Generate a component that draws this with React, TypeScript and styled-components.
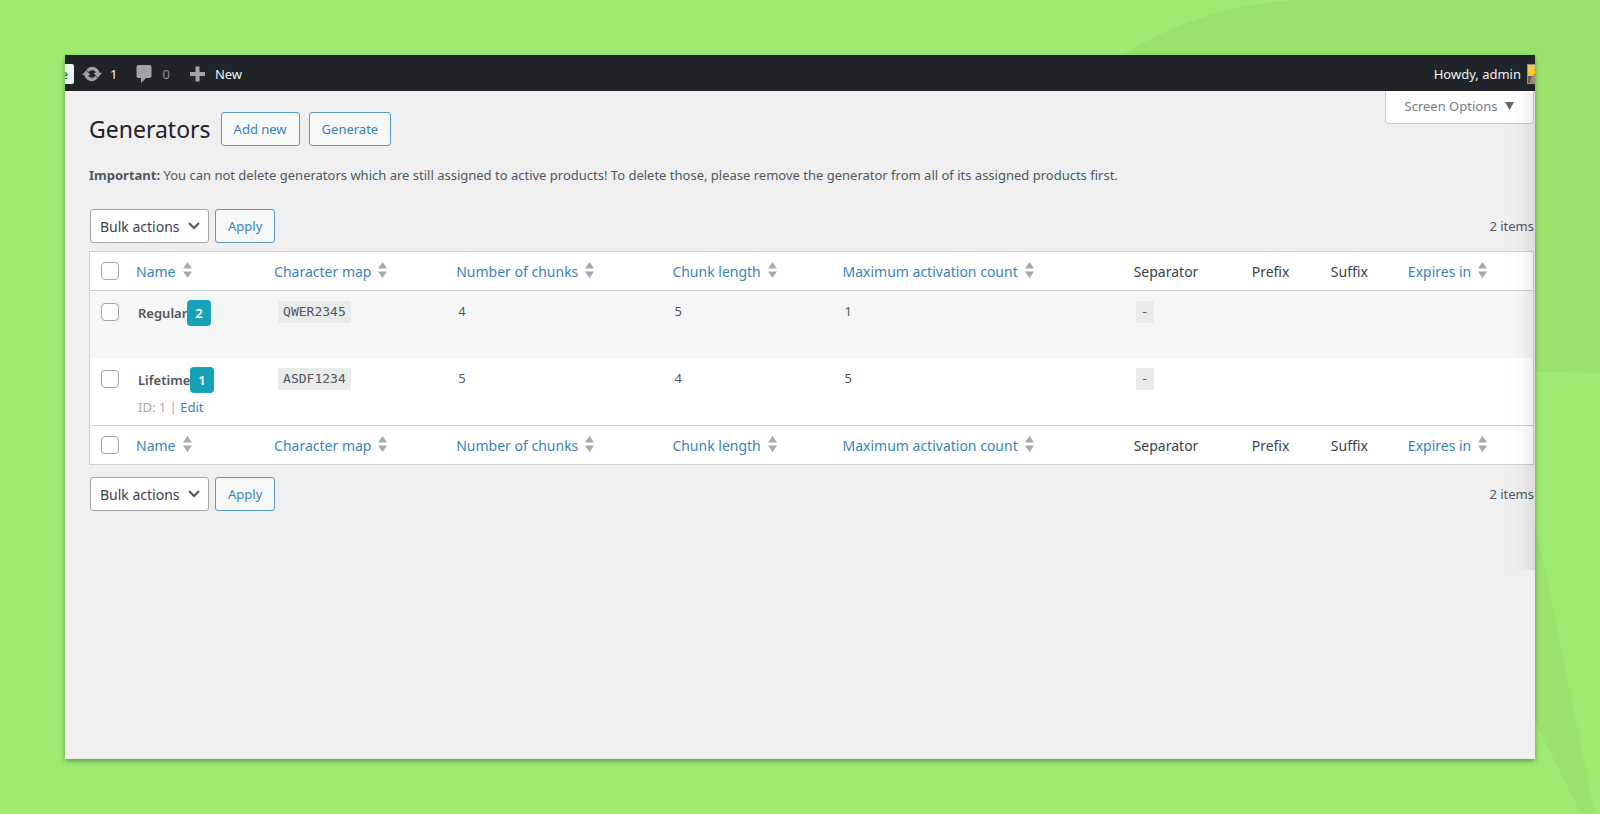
import React from "react";
import styled, { createGlobalStyle } from "styled-components";

const Global = createGlobalStyle`
  *, *::before, *::after { box-sizing: border-box; }
  body {
    margin: 0;
    background: #9fea70;
    color: #50575e;
    font-family: "Noto Sans", "Open Sans", sans-serif;
    font-size: 14px;
    line-height: 20px;
  }
  button, select, input { font-family: inherit; margin: 0; }
  a { color: #3c82bd; text-decoration: none; }
`;

const Stage = styled.div`
  position: relative;
  display: flex;
  min-height: 100vh;
  padding: 55px 65px;
`;

const Backdrop = styled.svg`
  position: absolute;
  inset: 0;
  width: 100%;
  height: 100%;
`;

const FrameShadow = styled.div`
  position: relative;
  display: flex;
  flex: 1;
  min-width: 0;
  box-shadow: 0 2px 5px rgba(0, 0, 0, 0.35);
`;

const Frame = styled.div`
  position: relative;
  flex: 1;
  min-width: 0;
  overflow: hidden;
  background: #efefef;
`;

const EdgeShade = styled.div`
  position: absolute;
  top: 36px;
  right: 0;
  width: 26px;
  height: 479px;
  background: linear-gradient(to right, rgba(0, 0, 0, 0), rgba(0, 0, 0, 0.02) 50%, rgba(0, 0, 0, 0.08));
  pointer-events: none;
`;

const AdminBar = styled.header`
  display: flex;
  align-items: center;
  height: 36px;
  padding-top: 1px;
  background: #1f2428;
  color: #f0f0f1;
  overflow: hidden;
`;

const SiteChip = styled.a`
  display: flex;
  justify-content: flex-end;
  align-items: center;
  width: 9px;
  height: 20px;
  padding-right: 6px;
  margin-right: 8px;
  border-radius: 0 2px 2px 0;
  background: #e9f5ec;
  color: #2f7d6b;
  font-size: 13px;
  font-weight: 600;
  overflow: hidden;
`;

const BarLink = styled.a<{ $dim?: boolean }>`
  display: flex;
  align-items: center;
  gap: 8px;
  margin-right: 17px;
  color: ${(p) => (p.$dim ? "#8c9297" : "#f0f0f1")};
  font-size: 13px;
`;

const BarIcon = styled.svg`
  display: block;
  width: 20px;
  height: 20px;
  overflow: visible;
  fill: #a0a5aa;
`;

const Account = styled.a`
  display: flex;
  align-items: center;
  gap: 6px;
  margin-left: auto;
  color: #f0f0f1;
  font-size: 13px;
`;

const Avatar = styled.svg`
  display: block;
  width: 8px;
  height: 20px;
`;

const Body = styled.main`
  position: relative;
  padding: 21px 1px 24px 24px;
`;

const ScreenOptions = styled.button`
  position: absolute;
  top: 0;
  right: 1px;
  display: flex;
  align-items: center;
  justify-content: center;
  gap: 8px;
  width: 149px;
  height: 33px;
  padding: 0 0 2px;
  border: 1px solid #cfd0d2;
  border-top: 0;
  border-radius: 0 0 4px 4px;
  background: #fff;
  color: #787c82;
  font-size: 13px;
`;

const Caret = styled.svg`
  width: 9px;
  height: 8px;
  fill: #646970;
`;

const TitleRow = styled.div`
  display: flex;
  align-items: center;
  gap: 9px;
`;

const Title = styled.h1`
  margin: 0 1px 0 0;
  color: #1d2327;
  font-size: 23px;
  font-weight: 400;
  line-height: 34px;
`;

const Button = styled.button`
  height: 34px;
  padding: 0 12px;
  border: 1px solid #5a98cb;
  border-radius: 3px;
  background: #f6f7f7;
  color: #3c82bd;
  font-size: 13px;
  line-height: 20px;
`;

const Notice = styled.p`
  margin: 19px 0 0;
  font-size: 13px;
  line-height: 20px;
`;

const TableNav = styled.div<{ $bottom?: boolean }>`
  display: flex;
  align-items: center;
  gap: 6px;
  margin-left: 1px;
  margin-top: ${(p) => (p.$bottom ? 12 : 24)}px;
  margin-bottom: ${(p) => (p.$bottom ? 0 : 8)}px;
`;

const SelectBox = styled.div`
  position: relative;
`;

const Select = styled.select`
  display: block;
  appearance: none;
  width: 119px;
  height: 34px;
  padding: 1px 0 0 9px;
  border: 1px solid #a3a6ab;
  border-radius: 3px;
  background: #fff;
  color: #3c434a;
  font-size: 14px;
`;

const Chevron = styled.svg`
  position: absolute;
  top: 13px;
  right: 9px;
  width: 12px;
  height: 8px;
  fill: none;
  stroke: #50575e;
  stroke-width: 2;
  pointer-events: none;
`;

const Count = styled.span`
  margin-left: auto;
  font-size: 13px;
`;

const Table = styled.table`
  width: 100%;
  table-layout: fixed;
  border-collapse: separate;
  border-spacing: 0;
  border: 1px solid #cfd0d2;
  background: #fff;
`;

const HeadCell = styled.th<{ $foot?: boolean }>`
  height: 39px;
  padding: 1px 0 0 9px;
  border: 0 solid #cfd0d2;
  border-width: ${(p) => (p.$foot ? "1px 0 0" : "0 0 1px")};
  color: #3c434a;
  font-size: 14px;
  font-weight: 400;
  text-align: left;
  white-space: nowrap;
`;

const SortLink = styled.a`
  display: inline-flex;
  align-items: center;
  gap: 7px;
`;

const SortMark = styled.svg`
  width: 9px;
  height: 16px;
  margin-bottom: 3px;
  fill: #a7aaad;
`;

const Row = styled.tr<{ $striped?: boolean }>`
  background: ${(p) => (p.$striped ? "#f5f7f7" : "#fff")};
`;

const Cell = styled.td`
  height: 67px;
  padding: 9px 0 0 11px;
  vertical-align: top;
  font-size: 13px;
  line-height: 22px;
`;

const Check = styled.input`
  display: block;
  appearance: none;
  width: 18px;
  height: 18px;
  margin-top: 3px;
  border: 1px solid #a3a6ab;
  border-radius: 4px;
  background: #fff;
`;

const CheckHead = styled(HeadCell)`
  padding: 0 0 0 11px;

  ${Check} {
    margin-top: 0;
  }
`;

const NameLine = styled.div`
  display: flex;
  align-items: center;
  font-weight: 600;
  line-height: 26px;
`;

const Badge = styled.span`
  padding: 0 8px;
  border-radius: 4px;
  background: #17a2b8;
  color: #fff;
  font-size: 13px;
`;

const RowActions = styled.div`
  color: #a7aaad;
  line-height: 20px;
  padding-top: 4px;
`;

const Code = styled.code`
  display: inline-block;
  padding: 0 5px;
  margin-left: 2px;
  background: #e9eaea;
  font-family: "DejaVu Sans Mono", monospace;
  font-size: 13px;
  line-height: 22px;
`;

const SepCode = styled(Code)`
  margin-left: 0;
`;

const columns = [
  { label: "Name", width: 138, sortable: true },
  { label: "Character map", width: 182, sortable: true },
  { label: "Number of chunks", width: 216, sortable: true },
  { label: "Chunk length", width: 170, sortable: true },
  { label: "Maximum activation count", width: 291, sortable: true },
  { label: "Separator", width: 118, sortable: false },
  { label: "Prefix", width: 79, sortable: false },
  { label: "Suffix", width: 77, sortable: false },
  { label: "Expires in", width: 134, sortable: true },
];

const rows = [
  { name: "Regular", badge: 2, map: "QWER2345", chunks: 4, length: 5, max: 1, id: 0 },
  { name: "Lifetime", badge: 1, map: "ASDF1234", chunks: 5, length: 4, max: 5, id: 1 },
];

function HeadRow({ foot }: { foot?: boolean }) {
  return (
    <tr>
      <CheckHead $foot={foot}>
        <Check type="checkbox" aria-label="Select all" />
      </CheckHead>
      {columns.map((c) => (
        <HeadCell key={c.label} $foot={foot} scope="col">
          {c.sortable ? (
            <SortLink href="#">
              {c.label}
              <SortMark viewBox="0 0 9 16">
                <path d="M4.500 0L9 6.500H0zM4.500 16L9 9.500H0z" />
              </SortMark>
            </SortLink>
          ) : (
            c.label
          )}
        </HeadCell>
      ))}
    </tr>
  );
}

function BulkNav({ bottom }: { bottom?: boolean }) {
  return (
    <TableNav $bottom={bottom}>
      <SelectBox>
        <Select aria-label="Select bulk action">
          <option>Bulk actions</option>
        </Select>
        <Chevron viewBox="0 0 12 8">
          <path d="M1 1l5 5 5-5" />
        </Chevron>
      </SelectBox>
      <Button type="button">Apply</Button>
      <Count>2 items</Count>
    </TableNav>
  );
}

export default function App() {
  return (
    <>
      <Global />
      <Stage>
        <Backdrop viewBox="0 0 1600 814" preserveAspectRatio="none" fill="#9ae26c">
          <path d="M1090 76C1150 32 1225 0 1310 0H1600V373L1500 371Z" />
          <path d="M1500 352L1595 814H1581L1500 651Z" />
        </Backdrop>
        <FrameShadow>
          <Frame>
            <AdminBar>
              <SiteChip href="#">e</SiteChip>
              <BarLink href="#">
                <BarIcon viewBox="0 0 20 20" stroke="#a0a5aa">
                  <path d="M10.2 3.28c3.53 0 6.43 2.61 6.92 6h2.08l-3.5 4-3.5-4h2.32c-.45-1.97-2.21-3.45-4.32-3.45-1.45 0-2.73.71-3.54 1.78L4.95 5.66C6.23 4.2 8.11 3.28 10.2 3.28zm-.4 13.44c-3.52 0-6.43-2.61-6.92-6H.8l3.5-4c1.17 1.33 2.33 2.67 3.5 4H5.48c.45 1.97 2.21 3.45 4.32 3.45 1.45 0 2.73-.71 3.54-1.78l1.71 1.95c-1.28 1.46-3.15 2.38-5.25 2.38z" />
                </BarIcon>
                1
              </BarLink>
              <BarLink href="#" $dim>
                <BarIcon viewBox="0 0 20 20">
                  <path d="M4.500 1h11c1.100 0 2 .9 2 2v9c0 1.100-.9 2-2 2h-3.500l-5 5v-5H4.500c-1.100 0-2-.9-2-2V3c0-1.100.9-2 2-2z" />
                </BarIcon>
                0
              </BarLink>
              <BarLink href="#">
                <BarIcon viewBox="0 0 20 20">
                  <path d="M18 8v4h-5.500v5.500h-4V12H3V8h5.500V2.500h4V8z" />
                </BarIcon>
                New
              </BarLink>
              <Account href="#">
                Howdy, admin
                <Avatar viewBox="0 0 8 20">
                  <rect width="8" height="20" fill="#8c8f94" />
                  <rect x="1" y="1" width="7" height="11" fill="#f5c83c" />
                  <path d="M8 4v3l-1-1zM8 9v6l-4 4H3l2-6z" fill="#c98b3c" />
                  <path d="M1 12h4l-2 7H1z" fill="#5d6166" />
                  <path d="M5 13l3-1v7H4z" fill="#a58a78" />
                </Avatar>
              </Account>
            </AdminBar>
            <Body>
              <ScreenOptions type="button">
                Screen Options
                <Caret viewBox="0 0 9 8">
                  <path d="M0 0h9L4.500 8z" />
                </Caret>
              </ScreenOptions>
              <TitleRow>
                <Title>Generators</Title>
                <Button type="button">Add new</Button>
                <Button type="button">Generate</Button>
              </TitleRow>
              <Notice>
                <strong>Important:</strong> You can not delete generators which are still assigned to active products! To
                delete those, please remove the generator from all of its assigned products first.
              </Notice>
              <BulkNav />
              <Table>
                <colgroup>
                  <col style={{ width: 37 }} />
                  {columns.map((c) => (
                    <col key={c.label} style={{ width: c.width }} />
                  ))}
                </colgroup>
                <thead>
                  <HeadRow />
                </thead>
                <tbody>
                  {rows.map((r) => (
                    <Row key={r.name} $striped={r.id === 0}>
                      <Cell>
                        <Check type="checkbox" aria-label={`Select ${r.name}`} />
                      </Cell>
                      <Cell>
                        <NameLine>
                          {r.name}
                          <Badge>{r.badge}</Badge>
                        </NameLine>
                        {r.id > 0 && (
                          <RowActions>
                            ID: {r.id} | <a href="#">Edit</a>
                          </RowActions>
                        )}
                      </Cell>
                      <Cell>
                        <Code>{r.map}</Code>
                      </Cell>
                      <Cell>{r.chunks}</Cell>
                      <Cell>{r.length}</Cell>
                      <Cell>{r.max}</Cell>
                      <Cell>
                        <SepCode>-</SepCode>
                      </Cell>
                      <Cell />
                      <Cell />
                      <Cell />
                    </Row>
                  ))}
                </tbody>
                <tfoot>
                  <HeadRow foot />
                </tfoot>
              </Table>
              <BulkNav bottom />
            </Body>
            <EdgeShade />
          </Frame>
        </FrameShadow>
      </Stage>
    </>
  );
}
